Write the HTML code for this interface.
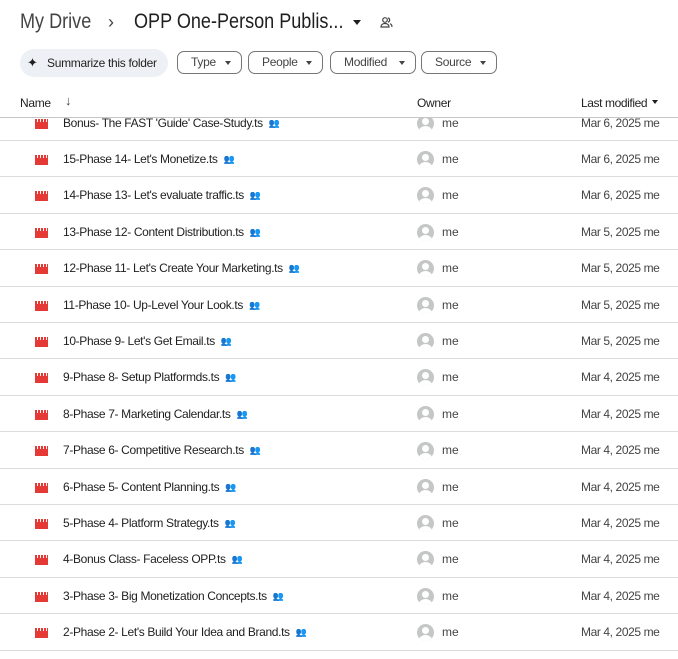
<!DOCTYPE html>
<html><head><style>
body{margin:0;width:678px;height:658px;background:#fff;font-family:"Liberation Sans",Arial,sans-serif;color:#1f1f1f;overflow:hidden;position:relative}
.t{position:absolute;white-space:nowrap}
.sx{transform:scaleX(0.86);transform-origin:0 0}
.chip{position:absolute;top:51px;height:23px;border:1px solid #747775;border-radius:7px;font-size:12px;color:#444;box-sizing:border-box;line-height:21px;padding-left:13px;letter-spacing:-0.3px}
.chip:after{content:"";position:absolute;right:10px;top:9px;border:3px solid transparent;border-top:4px solid #444}
.list{position:absolute;top:117px;left:0;width:678px;height:541px;overflow:hidden;border-top:1px solid #c4c7c5}
.row{position:absolute;left:0;width:678px;height:36.4px;border-bottom:1px solid #dadce0;box-sizing:border-box}
.ic{position:absolute;left:35px;top:14px;width:13px;height:10px;background:#e53935}
.ic:before{content:"";position:absolute;left:0;top:0;width:13px;height:3px;background:repeating-linear-gradient(90deg,#e53935 0 2px,#fff 2px 3px);}
.nm{position:absolute;left:63px;top:11px;font-size:12px;color:#1f1f1f;letter-spacing:-0.35px}
.sh{display:inline-block;margin-left:6px;font-size:9px;color:#555;vertical-align:1px}
.av{position:absolute;left:417px;top:10px;width:17px;height:17px;border-radius:50%;background:#c4c7c5;overflow:hidden}
.av:before{content:"";position:absolute;left:5px;top:3px;width:7px;height:7px;border-radius:50%;background:#fff}
.av:after{content:"";position:absolute;left:2px;top:11px;width:13px;height:10px;border-radius:50%;background:#fff}
.me{position:absolute;left:442px;top:11px;font-size:12px;color:#444}
.dt{position:absolute;left:581px;top:11px;font-size:12px;color:#444;letter-spacing:-0.4px}
</style></head><body>
<div class="t sx" style="left:20px;top:10px;font-size:21px;color:#444">My Drive</div>
<div class="t" style="left:108px;top:12px;font-size:18px;color:#444">›</div>
<div class="t sx" style="left:134px;top:10px;font-size:21px;color:#1f1f1f">OPP One-Person Publis...</div>
<div class="t" style="left:353px;top:20px;border:4px solid transparent;border-top:5px solid #1f1f1f;width:0;height:0"></div>
<svg class="t" style="left:380px;top:16px" width="13" height="13" viewBox="0 0 13 13" fill="none" stroke="#444" stroke-width="1.2"><circle cx="5" cy="4" r="2.3"/><path d="M1 11c0-2.5 2-3.5 4-3.5s4 1 4 3.5z"/><path d="M8 1.8a2.3 2.3 0 010 4.4M10 7.7c1.2.5 2 1.5 2 3.3"/></svg>
<div class="t" style="left:20px;top:49px;width:148px;height:28px;border-radius:14px;background:#edf0f5"></div>
<div class="t" style="left:27px;top:55px;font-size:13px">✦</div>
<div class="t" style="left:47px;top:56px;font-size:12px;color:#1f1f1f;letter-spacing:-0.3px">Summarize this folder</div>
<div class="chip" style="left:177px;width:65px">Type</div>
<div class="chip" style="left:248px;width:75px">People</div>
<div class="chip" style="left:330px;width:86px">Modified</div>
<div class="chip" style="left:421px;width:76px">Source</div>
<div class="t" style="left:20px;top:96px;font-size:12px;letter-spacing:-0.3px">Name</div>
<div class="t" style="left:65px;top:93px;font-size:13px;color:#444">↓</div>
<div class="t" style="left:417px;top:96px;font-size:12px;letter-spacing:-0.3px">Owner</div>
<div class="t" style="left:581px;top:96px;font-size:12px;letter-spacing:-0.4px">Last modified</div>
<div class="t" style="left:652px;top:100px;border:3.5px solid transparent;border-top:4px solid #1f1f1f;width:0;height:0"></div>
<div class="list">
<div class="row" style="top:-13.4px"><div class="ic"></div><div class="nm">Bonus- The FAST 'Guide' Case-Study.ts<span class="sh">👥</span></div><div class="av"></div><div class="me">me</div><div class="dt">Mar 6, 2025 me</div></div>
<div class="row" style="top:23px"><div class="ic"></div><div class="nm">15-Phase 14- Let's Monetize.ts<span class="sh">👥</span></div><div class="av"></div><div class="me">me</div><div class="dt">Mar 6, 2025 me</div></div>
<div class="row" style="top:59.4px"><div class="ic"></div><div class="nm">14-Phase 13- Let's evaluate traffic.ts<span class="sh">👥</span></div><div class="av"></div><div class="me">me</div><div class="dt">Mar 6, 2025 me</div></div>
<div class="row" style="top:95.8px"><div class="ic"></div><div class="nm">13-Phase 12- Content Distribution.ts<span class="sh">👥</span></div><div class="av"></div><div class="me">me</div><div class="dt">Mar 5, 2025 me</div></div>
<div class="row" style="top:132.2px"><div class="ic"></div><div class="nm">12-Phase 11- Let's Create Your Marketing.ts<span class="sh">👥</span></div><div class="av"></div><div class="me">me</div><div class="dt">Mar 5, 2025 me</div></div>
<div class="row" style="top:168.6px"><div class="ic"></div><div class="nm">11-Phase 10- Up-Level Your Look.ts<span class="sh">👥</span></div><div class="av"></div><div class="me">me</div><div class="dt">Mar 5, 2025 me</div></div>
<div class="row" style="top:205px"><div class="ic"></div><div class="nm">10-Phase 9- Let's Get Email.ts<span class="sh">👥</span></div><div class="av"></div><div class="me">me</div><div class="dt">Mar 5, 2025 me</div></div>
<div class="row" style="top:241.4px"><div class="ic"></div><div class="nm">9-Phase 8- Setup Platformds.ts<span class="sh">👥</span></div><div class="av"></div><div class="me">me</div><div class="dt">Mar 4, 2025 me</div></div>
<div class="row" style="top:277.8px"><div class="ic"></div><div class="nm">8-Phase 7- Marketing Calendar.ts<span class="sh">👥</span></div><div class="av"></div><div class="me">me</div><div class="dt">Mar 4, 2025 me</div></div>
<div class="row" style="top:314.2px"><div class="ic"></div><div class="nm">7-Phase 6- Competitive Research.ts<span class="sh">👥</span></div><div class="av"></div><div class="me">me</div><div class="dt">Mar 4, 2025 me</div></div>
<div class="row" style="top:350.6px"><div class="ic"></div><div class="nm">6-Phase 5- Content Planning.ts<span class="sh">👥</span></div><div class="av"></div><div class="me">me</div><div class="dt">Mar 4, 2025 me</div></div>
<div class="row" style="top:387px"><div class="ic"></div><div class="nm">5-Phase 4- Platform Strategy.ts<span class="sh">👥</span></div><div class="av"></div><div class="me">me</div><div class="dt">Mar 4, 2025 me</div></div>
<div class="row" style="top:423.4px"><div class="ic"></div><div class="nm">4-Bonus Class- Faceless OPP.ts<span class="sh">👥</span></div><div class="av"></div><div class="me">me</div><div class="dt">Mar 4, 2025 me</div></div>
<div class="row" style="top:459.8px"><div class="ic"></div><div class="nm">3-Phase 3- Big Monetization Concepts.ts<span class="sh">👥</span></div><div class="av"></div><div class="me">me</div><div class="dt">Mar 4, 2025 me</div></div>
<div class="row" style="top:496.2px"><div class="ic"></div><div class="nm">2-Phase 2- Let's Build Your Idea and Brand.ts<span class="sh">👥</span></div><div class="av"></div><div class="me">me</div><div class="dt">Mar 4, 2025 me</div></div>
</div>
</body></html>
